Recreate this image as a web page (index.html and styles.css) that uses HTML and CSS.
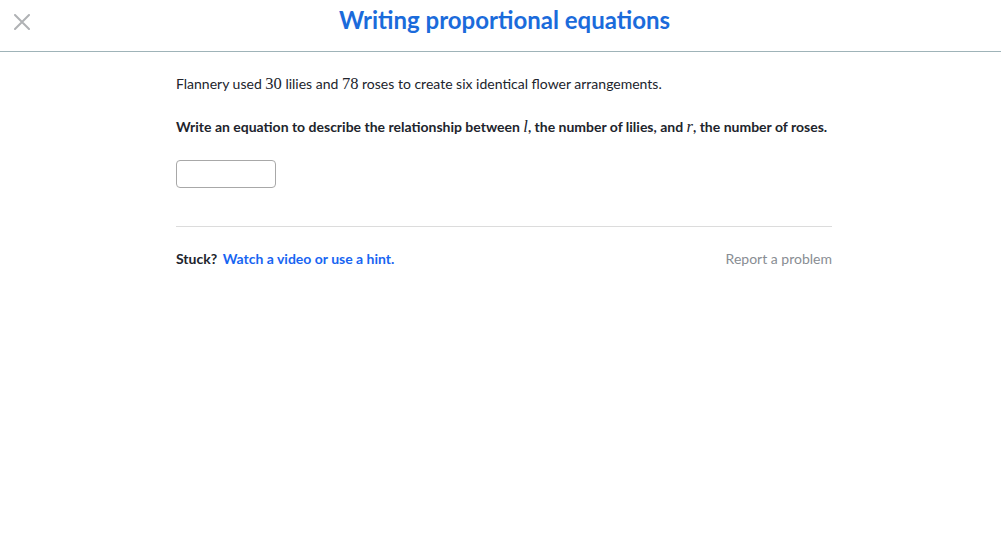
FILE: index.html
```html
<!DOCTYPE html>
<html>
<head>
<meta charset="utf-8">
<link rel="stylesheet" href="styles.css">
</head>
<body>
<header class="topbar">
  <button class="close" aria-label="Close">
    <svg width="16" height="16" viewBox="0 0 16 16"><path d="M1 1 L15 15 M15 1 L1 15" stroke="#b0b2b5" stroke-width="2" stroke-linecap="round"/></svg>
  </button>
  <h1 class="title">Writing proportional equations</h1>
</header>
<main class="content">
  <p class="problem">Flannery used <span class="math">30</span> lilies and <span class="math">78</span> roses to create six identical flower arrangements.</p>
  <p class="question">Write an equation to describe the relationship between <span class="math var">l</span>, the number of lilies, and <span class="math var">r</span>, the number of roses.</p>
  <input class="answer" type="text">
  <div class="footer">
    <div class="stuck"><span class="stuck-label">Stuck?</span> <a class="hint" href="#">Watch a video or use a hint.</a></div>
    <a class="report" href="#">Report a problem</a>
  </div>
</main>
</body>
</html>
```
FILE: styles.css
```css
html, body {
  margin: 0;
  padding: 0;
  background: #fff;
  font-family: Lato, "Open Sans", sans-serif;
  color: #21242c;
}
.topbar {
  position: relative;
  height: 51px;
  border-bottom: 1px solid #9fb3b8;
  display: flex;
  justify-content: center;
}
.close {
  position: absolute;
  left: 14px;
  top: 14px;
  border: 0;
  background: none;
  padding: 0;
  width: 16px;
  height: 16px;
}
.close svg { display: block; }
.title {
  margin: 0 0 0 8px;
  font-size: 24px;
  font-weight: 700;
  color: #1b6bdb;
  line-height: 40px;
}
.content {
  width: 656px;
  margin-left: 176px;
  padding-top: 22px;
}
.problem {
  margin: 0;
  font-size: 14px;
  line-height: 20px;
  white-space: nowrap;
}
.question {
  margin: 23px 0 0;
  font-size: 14px;
  font-weight: 700;
  line-height: 20px;
  white-space: nowrap;
}
.math {
  font-family: "Liberation Serif", "Times New Roman", serif;
  font-size: 16.5px;
  font-weight: 400;
}
.var { font-style: italic; }
.answer {
  display: block;
  margin-top: 23px;
  width: 100px;
  height: 28px;
  box-sizing: border-box;
  border: 1px solid #a8a8a8;
  border-radius: 4px;
}
.footer {
  margin-top: 38px;
  border-top: 1px solid #dcdcdc;
  padding-top: 23px;
  display: flex;
  justify-content: space-between;
  align-items: baseline;
  font-size: 14px;
}
.stuck-label { font-weight: 700; margin-right: 2px; }
.hint {
  color: #1865f2;
  font-weight: 700;
  text-decoration: none;
}
.report {
  color: #888d93;
  text-decoration: none;
}
```
